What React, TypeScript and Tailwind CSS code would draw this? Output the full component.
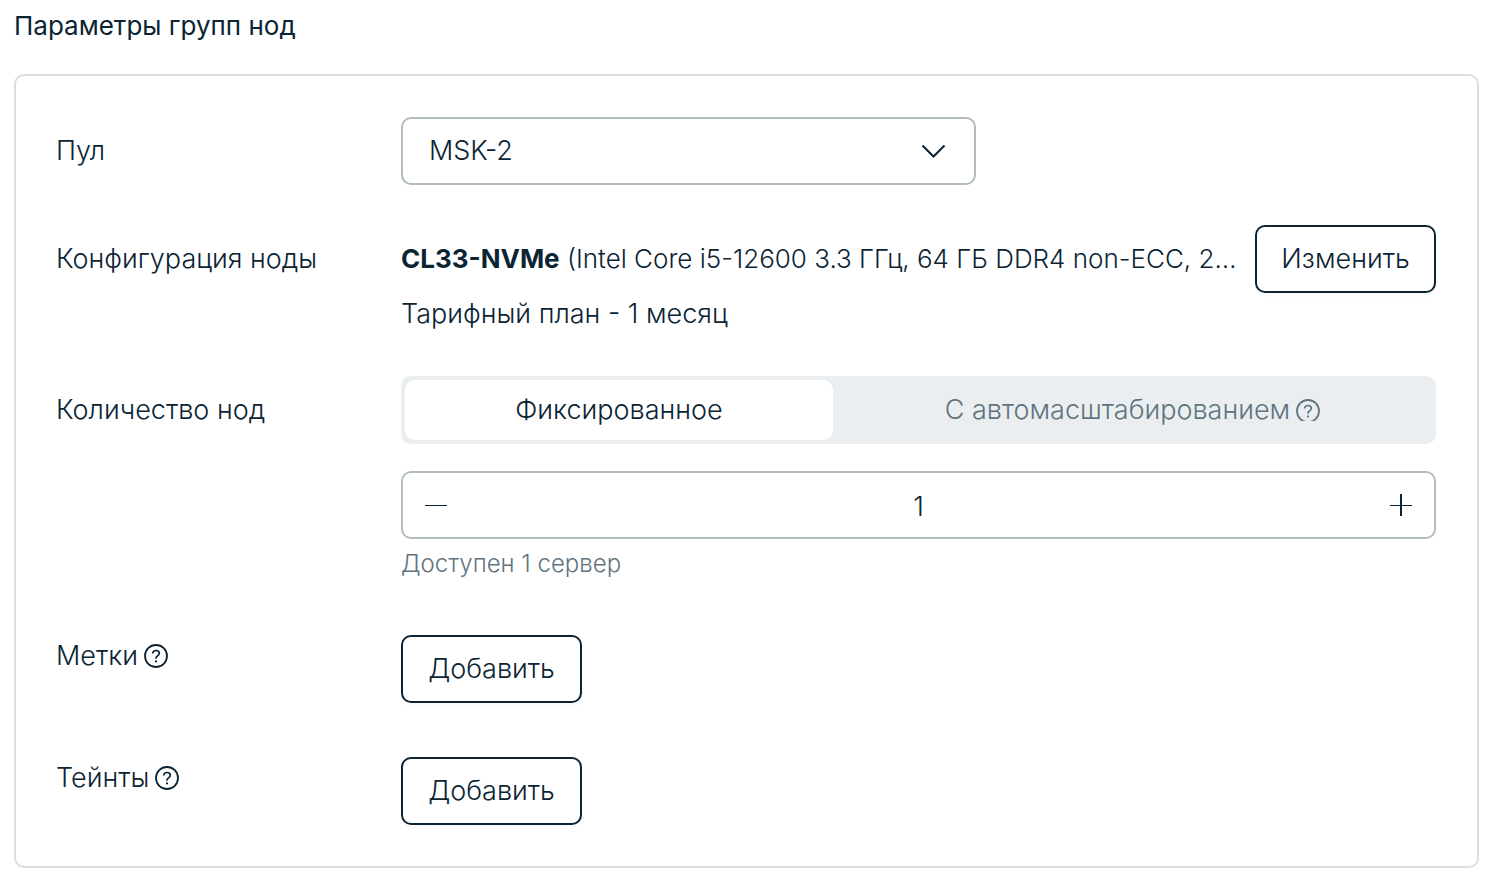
import React, { useState } from 'react'

interface HelpIconProps {
  className?: string;
}

const HelpIcon: React.FC<HelpIconProps> = ({ className = '' }) => (
  <svg
    viewBox="0 0 24 24"
    fill="none"
    stroke="currentColor"
    className={`w-6 shrink-0 ${className}`}
    aria-hidden="true"
  >
    <circle cx="12" cy="12" r="11" strokeWidth="1.8" />
    <path d="M8.7 9.4c0-1.7 1.4-2.9 3.3-2.9s3.3 1.1 3.3 2.8c0 1.3-.8 1.9-1.8 2.6-1 .6-1.5 1.1-1.5 2.4v.5" strokeWidth="1.7" />
    <circle cx="12" cy="17.4" r="1.1" fill="currentColor" stroke="none" />
  </svg>
)

interface FieldRowProps {
  label: React.ReactNode;
  htmlFor?: string;
  labelClass?: string;
  children: React.ReactNode;
}

const FieldRow: React.FC<FieldRowProps> = ({ label, htmlFor, labelClass = 'h-[68px]', children }) => (
  <div className="flex items-start">
    <label htmlFor={htmlFor} className={`flex w-[345px] shrink-0 items-center gap-[6px] ${labelClass}`}>
      {label}
    </label>
    <div className="min-w-0 flex-1">{children}</div>
  </div>
)

interface OutlineButtonProps {
  id?: string;
  children: React.ReactNode;
}

const OutlineButton: React.FC<OutlineButtonProps> = ({ id, children }) => (
  <button
    id={id}
    type="button"
    className="flex h-[68px] w-[181px] shrink-0 items-center justify-center rounded-[10px] border-2 border-[#0b2433] bg-white shadow-[0_4px_0_#fcfcfc]"
  >
    {children}
  </button>
)

const App = () => {
  const [count, setCount] = useState(1)
  const [mode, setMode] = useState<'fixed' | 'auto'>('fixed')

  const tabClass = (active: boolean) =>
    active ? 'bg-white text-[#0b2433]' : 'text-[#5f737e]'

  return (
    <main className="min-h-screen bg-white pt-2 pr-[13px] pb-[22px] pl-[14px] font-['Inter',sans-serif] text-[27px] leading-9 font-light text-[#0b2433]">
      <h1 className="text-[26px] leading-9 font-normal">Параметры групп нод</h1>

      <section className="mt-[30px] rounded-[10px] border-2 border-[#d9dee2] py-[41px] pr-[41px] pl-10">
        <FieldRow label="Пул" htmlFor="pool">
          <div className="relative w-[575px] max-w-full">
            <select
              id="pool"
              className="h-[68px] w-full appearance-none rounded-[10px] border-2 border-[#b1bcc0] bg-white pr-16 pl-[26px]"
            >
              <option>MSK-2</option>
            </select>
            <svg
              viewBox="0 0 24 14"
              fill="none"
              stroke="currentColor"
              strokeWidth="2"
              className="pointer-events-none absolute top-[27px] right-[30px] w-6"
              aria-hidden="true"
            >
              <path d="M.5 1.5 11.5 12.5 22.5 1.5" />
            </svg>
          </div>
        </FieldRow>

        <div className="mt-10">
          <FieldRow label="Конфигурация ноды" htmlFor="config">
            <div className="flex items-center justify-between gap-3">
              <p className="truncate text-[26px] leading-9">
                <b className="font-bold">CL33-NVMe</b> (Intel Core i5-12600 3.3 ГГц, 64 ГБ DDR4 non-ECC, 2…
              </p>
              <OutlineButton id="config">Изменить</OutlineButton>
            </div>
            <p className="mt-[3px]">Тарифный план - 1 месяц</p>
          </FieldRow>
        </div>

        {/* Node count: mode switch and stepper */}
        <div className="mt-11">
          <FieldRow label="Количество нод" htmlFor="count">
            <div className="grid h-[68px] grid-cols-[5fr_7fr] rounded-[10px] bg-[#eaeef1] p-1">
              <button
                type="button"
                aria-pressed={mode === 'fixed'}
                onClick={() => setMode('fixed')}
                className={`rounded-[10px] ${tabClass(mode === 'fixed')}`}
              >
                Фиксированное
              </button>
              <button
                type="button"
                aria-pressed={mode === 'auto'}
                onClick={() => setMode('auto')}
                className={`flex items-center justify-center gap-[6px] rounded-[10px] ${tabClass(mode === 'auto')}`}
              >
                С автомасштабированием
                <span className="h-[22px] overflow-hidden">
                  <HelpIcon />
                </span>
              </button>
            </div>

            <div className="mt-[27px] flex h-[68px] items-center rounded-[10px] border-2 border-[#b1bcc0] px-[21px]">
              <button type="button" aria-label="Уменьшить" onClick={() => setCount(Math.max(1, count - 1))}>
                <svg viewBox="0 0 24 24" className="w-6" shapeRendering="crispEdges" aria-hidden="true">
                  <path d="M1 12h22v1H1z" fill="currentColor" />
                </svg>
              </button>
              <input
                id="count"
                type="text"
                inputMode="numeric"
                value={count}
                onChange={(e) => setCount(Number(e.target.value) || 1)}
                className="min-w-0 flex-1 bg-transparent pt-[3px] text-center"
              />
              <button type="button" aria-label="Увеличить" onClick={() => setCount(count + 1)}>
                <svg viewBox="0 0 24 24" className="w-6" shapeRendering="crispEdges" aria-hidden="true">
                  <path d="M1 12h22v1H1zM11 1h2v22h-2z" fill="currentColor" />
                </svg>
              </button>
            </div>
            <p className="mt-[7px] text-[24px] leading-9 text-[#5f737e]">Доступен 1 сервер</p>
          </FieldRow>
        </div>

        <div className="mt-[53px]">
          <FieldRow label={<>Метки <HelpIcon /></>} htmlFor="labels" labelClass="h-[42px]">
            <OutlineButton id="labels">Добавить</OutlineButton>
          </FieldRow>
        </div>

        <div className="mt-[54px]">
          <FieldRow label={<>Тейнты <HelpIcon /></>} htmlFor="taints" labelClass="h-[42px]">
            <OutlineButton id="taints">Добавить</OutlineButton>
          </FieldRow>
        </div>
      </section>
    </main>
  )
}

export default App
